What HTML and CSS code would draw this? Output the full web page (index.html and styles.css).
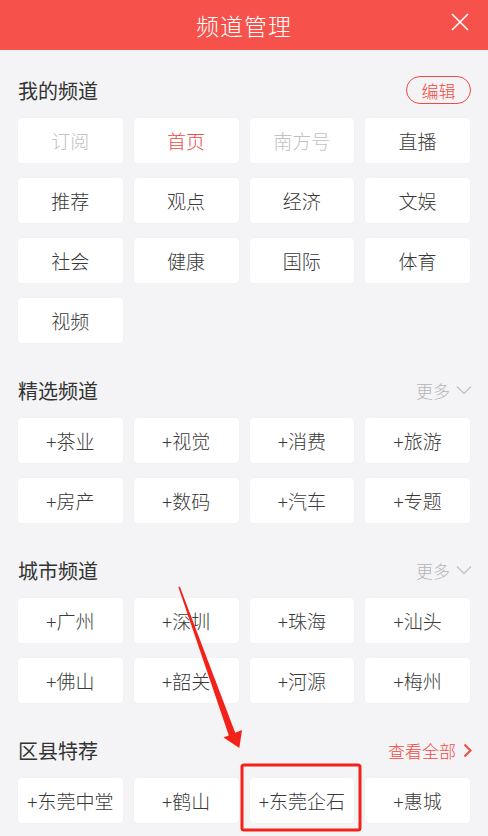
FILE: index.html
```html
<!DOCTYPE html>
<html lang="zh-CN">

<head>
    <meta charset="UTF-8">
    <meta name="viewport" content="width=device-width, initial-scale=1.0">
    <title>频道管理</title>
    <link rel="stylesheet" href="styles.css">
</head>

<body>
    <div class="header">
        <h1>频道管理</h1>
        <a class="close" href="">
            <svg width="18" height="18" viewBox="0 0 18 18">
                <path d="M1 1L17 17M17 1L1 17" stroke="#fff" stroke-width="1.6" fill="none" />
            </svg>
        </a>
    </div>

    <div class="main">
        <!-- 我的频道 -->
        <div class="section">
            <div class="title">
                <h2>我的频道</h2>
                <a class="edit" href="">编辑</a>
            </div>
            <ul class="tiles">
                <li class="fixed">订阅</li>
                <li class="active">首页</li>
                <li class="fixed">南方号</li>
                <li>直播</li>
                <li>推荐</li>
                <li>观点</li>
                <li>经济</li>
                <li>文娱</li>
                <li>社会</li>
                <li>健康</li>
                <li>国际</li>
                <li>体育</li>
                <li>视频</li>
            </ul>
        </div>

        <!-- 精选频道 -->
        <div class="section">
            <div class="title">
                <h2>精选频道</h2>
                <a class="more" href="">更多
                    <svg width="16" height="10" viewBox="0 0 16 10">
                        <path d="M1 1.5L8 8.5L15 1.5" stroke="#c4c4c4" stroke-width="1.4" fill="none" />
                    </svg>
                </a>
            </div>
            <ul class="tiles">
                <li>+茶业</li>
                <li>+视觉</li>
                <li>+消费</li>
                <li>+旅游</li>
                <li>+房产</li>
                <li>+数码</li>
                <li>+汽车</li>
                <li>+专题</li>
            </ul>
        </div>

        <!-- 城市频道 -->
        <div class="section">
            <div class="title">
                <h2>城市频道</h2>
                <a class="more" href="">更多
                    <svg width="16" height="10" viewBox="0 0 16 10">
                        <path d="M1 1.5L8 8.5L15 1.5" stroke="#c4c4c4" stroke-width="1.4" fill="none" />
                    </svg>
                </a>
            </div>
            <ul class="tiles">
                <li>+广州</li>
                <li>+深圳</li>
                <li>+珠海</li>
                <li>+汕头</li>
                <li>+佛山</li>
                <li>+韶关</li>
                <li>+河源</li>
                <li>+梅州</li>
            </ul>
        </div>

        <!-- 区县特荐 -->
        <div class="section">
            <div class="title">
                <h2>区县特荐</h2>
                <a class="all" href="">查看全部
                    <svg width="9" height="15" viewBox="0 0 9 15">
                        <path d="M1.5 1.5L7.5 7.5L1.5 13.5" stroke="#ef4a43" stroke-width="2" fill="none" />
                    </svg>
                </a>
            </div>
            <ul class="tiles">
                <li>+东莞中堂</li>
                <li>+鹤山</li>
                <li>+东莞企石</li>
                <li>+惠城</li>
            </ul>
        </div>
    </div>

    <!-- 标注：箭头和红框 -->
    <svg class="mark" width="488" height="836" viewBox="0 0 488 836">
        <polygon points="178.3,587 179.8,586.5 235.5,733.6 229,736" fill="#f2221b" />
        <polygon points="223.5,737.5 242,730 239.3,748" fill="#f2221b" />
        <rect x="242" y="765" width="118" height="65" rx="2" fill="none" stroke="#f2221b" stroke-width="3" />
    </svg>
</body>

</html>
```

FILE: styles.css
```css
body,
h1,
h2,
ul,
li {
    margin: 0;
    padding: 0;
    font-weight: normal;
    list-style: none;
}

body {
    width: 488px;
    height: 836px;
    overflow: hidden;
    position: relative;
    background: #f4f4f6;
    font-family: "Noto Sans CJK SC", "Noto Sans", sans-serif;
    font-weight: 300;
    color: #333;
}

a {
    text-decoration: none;
}

.header {
    height: 50px;
    background: #f6514a;
    display: flex;
    align-items: center;
    justify-content: center;
    position: relative;
}

.header h1 {
    font-size: 23px;
    font-weight: 300;
    color: #fff;
    letter-spacing: 1px;
}

.close {
    position: absolute;
    right: 19px;
    top: 13px;
    display: flex;
}

.main {
    padding: 22px 18px 0;
    display: flex;
    flex-direction: column;
    gap: 29px;
}

.title {
    height: 36px;
    margin-bottom: 10px;
    display: flex;
    align-items: center;
    justify-content: space-between;
}

.title h2 {
    font-size: 20px;
    font-weight: 400;
    color: #333;
}

.edit {
    width: 63px;
    height: 26px;
    border: 1px solid #ef4a43;
    border-radius: 14px;
    color: #ef4a43;
    font-size: 17px;
    display: flex;
    align-items: center;
    justify-content: center;
    margin-right: -1px;
}

.more {
    color: #b4b4b4;
    font-size: 17px;
    display: flex;
    align-items: center;
    gap: 6px;
    margin-right: -2px;
}

.all {
    color: #ef4a43;
    font-size: 17px;
    display: flex;
    align-items: center;
    gap: 7px;
    margin-right: -2px;
}

.tiles {
    display: grid;
    grid-template-columns: repeat(4, 1fr);
    column-gap: 11px;
    row-gap: 15px;
}

.tiles li {
    height: 45px;
    background: #fff;
    border-radius: 4px;
    box-shadow: 0 0 2px rgba(0, 0, 0, 0.04);
    display: flex;
    align-items: center;
    justify-content: center;
    font-size: 19px;
    font-weight: 300;
    color: #3a3a3a;
}

.tiles li.fixed {
    color: #c2c2c2;
}

.tiles li.active {
    color: #ef4a43;
}

.mark {
    position: absolute;
    left: 0;
    top: 0;
}
```
